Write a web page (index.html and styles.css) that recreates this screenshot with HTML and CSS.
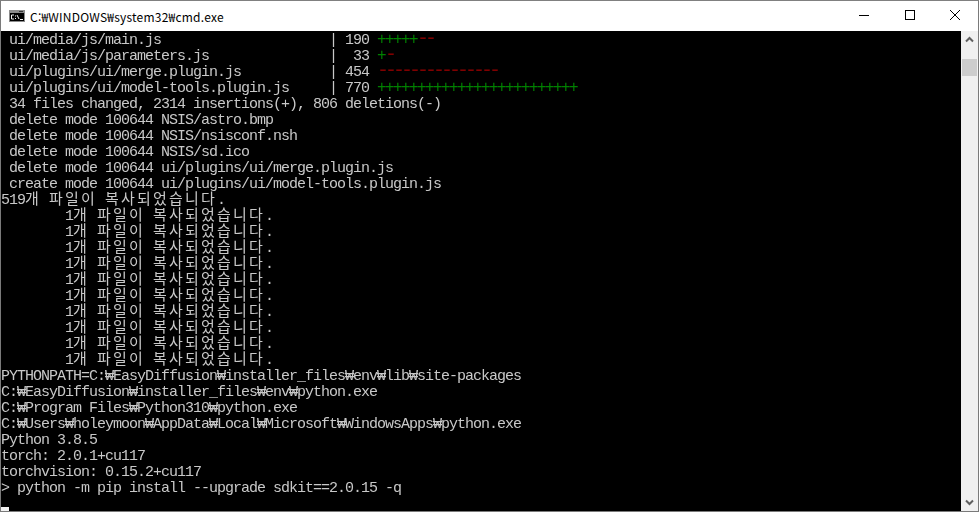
FILE: index.html
```html
<!DOCTYPE html>
<html lang="ko">
<head>
<meta charset="utf-8">
<title>cmd.exe</title>
<link rel="stylesheet" href="styles.css">
</head>
<body>
<div class="window">
  <header class="titlebar">
    <svg class="app-icon" width="16" height="12" viewBox="0 0 16 12" aria-hidden="true">
      <rect width="16" height="12" fill="#8c8c8c"/>
      <rect x="1" y="3" width="14" height="8" fill="#000"/>
      <path d="M10 1.500H14" stroke="#333"/>
      <path d="M5 5H2.500V9H5M6.500 5.500V6.500M6.500 8V9M8 5L10 9M11 9.500H14" fill="none" stroke="#f0f0f0"/>
    </svg>
    <span class="title">C:₩WINDOWS₩system32₩cmd.exe</span>
    <div class="controls">
      <button class="control" aria-label="최소화"><svg width="10" height="10" viewBox="0 0 10 10"><path d="M0 5.500H10" stroke="#000"/></svg></button>
      <button class="control" aria-label="최대화"><svg width="10" height="10" viewBox="0 0 10 10"><rect x=".5" y=".5" width="9" height="9" fill="none" stroke="#000"/></svg></button>
      <button class="control" aria-label="닫기"><svg width="10" height="10" viewBox="0 0 10 10"><path d="M0 0L10 10M10 0L0 10" stroke="#000"/></svg></button>
    </div>
  </header>
  <div class="content">
    <pre class="console"> ui/media/js/main.js                     | 190 <span class="add">+++++</span><span class="del">--</span>
 ui/media/js/parameters.js               |  33 <span class="add">+</span><span class="del">-</span>
 ui/plugins/ui/merge.plugin.js           | 454 <span class="del">---------------</span>
 ui/plugins/ui/model-tools.plugin.js     | 770 <span class="add">+++++++++++++++++++++++++</span>
 34 files changed, 2314 insertions(+), 806 deletions(-)
 delete mode 100644 NSIS/astro.bmp
 delete mode 100644 NSIS/nsisconf.nsh
 delete mode 100644 NSIS/sd.ico
 delete mode 100644 ui/plugins/ui/merge.plugin.js
 create mode 100644 ui/plugins/ui/model-tools.plugin.js
519<span class="ko">개</span> <span class="ko">파일이</span> <span class="ko">복사되었습니다</span>.
        1<span class="ko">개</span> <span class="ko">파일이</span> <span class="ko">복사되었습니다</span>.
        1<span class="ko">개</span> <span class="ko">파일이</span> <span class="ko">복사되었습니다</span>.
        1<span class="ko">개</span> <span class="ko">파일이</span> <span class="ko">복사되었습니다</span>.
        1<span class="ko">개</span> <span class="ko">파일이</span> <span class="ko">복사되었습니다</span>.
        1<span class="ko">개</span> <span class="ko">파일이</span> <span class="ko">복사되었습니다</span>.
        1<span class="ko">개</span> <span class="ko">파일이</span> <span class="ko">복사되었습니다</span>.
        1<span class="ko">개</span> <span class="ko">파일이</span> <span class="ko">복사되었습니다</span>.
        1<span class="ko">개</span> <span class="ko">파일이</span> <span class="ko">복사되었습니다</span>.
        1<span class="ko">개</span> <span class="ko">파일이</span> <span class="ko">복사되었습니다</span>.
        1<span class="ko">개</span> <span class="ko">파일이</span> <span class="ko">복사되었습니다</span>.
PYTHONPATH=C:₩EasyDiffusion₩installer_files₩env₩lib₩site-packages
C:₩EasyDiffusion₩installer_files₩env₩python.exe
C:₩Program Files₩Python310₩python.exe
C:₩Users₩holeymoon₩AppData₩Local₩Microsoft₩WindowsApps₩python.exe
Python 3.8.5
torch: 2.0.1+cu117
torchvision: 0.15.2+cu117
&gt; python -m pip install --upgrade sdkit==2.0.15 -q
<span class="cursor"></span></pre>
    <div class="scrollbar">
      <svg class="arrow" width="17" height="17" viewBox="0 0 17 17"><path d="M5 10.500L8.500 7L12 10.500" fill="none" stroke="#606060" stroke-width="2"/></svg>
      <div class="track"><div class="thumb"></div></div>
      <svg class="arrow" width="17" height="17" viewBox="0 0 17 17"><path d="M5 6.500L8.500 10L12 6.500" fill="none" stroke="#606060" stroke-width="2"/></svg>
    </div>
  </div>
</div>
</body>
</html>
```

FILE: styles.css
```css
* { box-sizing: border-box; }
html, body { margin: 0; padding: 0; height: 100%; background: #fff; overflow: hidden; }
.window {
  width: 979px;
  height: 512px;
  display: flex;
  flex-direction: column;
  border: 1px solid #7a7a7a;
  border-top-color: #808080;
}
.titlebar {
  height: 30px;
  flex: none;
  display: flex;
  align-items: center;
  padding-left: 8px;
  background: #fff;
}
.app-icon { flex: none; }
.title {
  margin-left: 5px;
  font-family: "Noto Sans CJK KR", "Noto Sans", sans-serif;
  font-size: 12px;
  letter-spacing: .22px;
  color: #000;
  white-space: nowrap;
}
.controls { margin-left: auto; display: flex; height: 28px; align-self: flex-start; }
.control {
  width: 45.500px;
  height: 28px;
  padding: 0;
  border: 0;
  background: transparent;
  display: flex;
  align-items: center;
  justify-content: center;
}
.content { flex: 1; min-height: 0; display: flex; background: #000; }
.console {
  flex: 1;
  min-width: 0;
  margin: 0;
  padding: 2px 0 0;
  color: #c8c8c8;
  font-family: "Liberation Mono", monospace;
  font-size: 15px;
  letter-spacing: -1px;
  line-height: 16px;
  overflow: hidden;
  will-change: transform;
}
.add {
  color: #008000;
  font-size: 16px;
  letter-spacing: -1.600px;
  line-height: 0;
}
.del {
  color: #800000;
  font-size: 20px;
  letter-spacing: -4px;
  line-height: 0;
}
.ko {
  font-family: "Noto Sans CJK KR", sans-serif;
  font-size: 15px;
  letter-spacing: 2.200px;
  font-weight: 400;
  line-height: 0;
}
.cursor {
  display: inline-block;
  width: 8px;
  height: 4px;
  background: #f2f2f2;
  vertical-align: -3px;
}
.scrollbar {
  width: 17px;
  flex: none;
  background: #f0f0f0;
  display: flex;
  flex-direction: column;
}
.arrow { flex: none; }
.track { flex: 1; }
.thumb { height: 17px; margin: 11px 1px 0; background: #cdcdcd; }
```
